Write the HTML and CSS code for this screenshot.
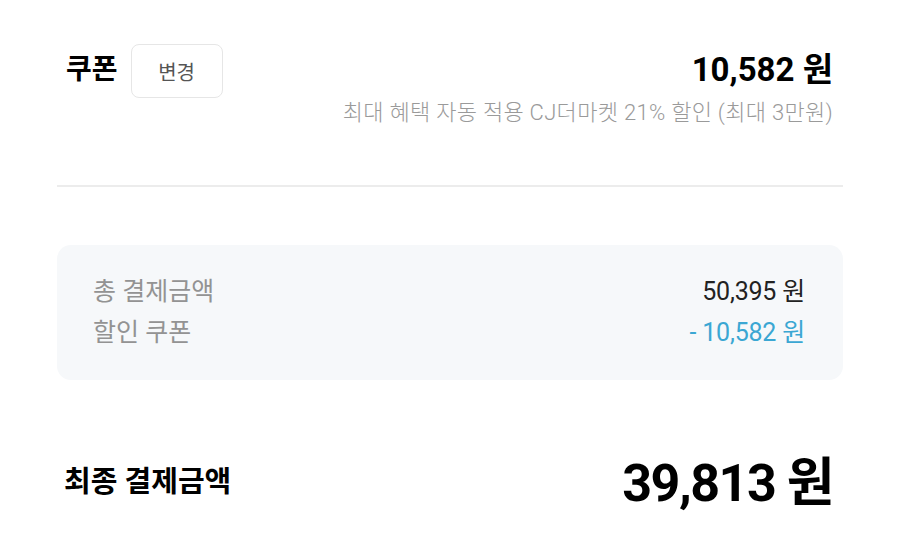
FILE: index.html
```html
<!DOCTYPE html>
<html lang="ko">
<head>
  <meta charset="UTF-8">
  <meta name="viewport" content="width=device-width, initial-scale=1.0">
  <title>결제금액</title>
  <link rel="stylesheet" href="styles.css">
</head>
<body>
  <div class="page">
    <!-- Coupon -->
    <div class="coupon">
      <div class="coupon-row">
        <div class="coupon-left">
          <span class="coupon-title">쿠폰</span>
          <button class="change-btn">변경</button>
        </div>
        <div class="coupon-amount">10,582 원</div>
      </div>
      <p class="coupon-note">최대 혜택 자동 적용 CJ더마켓 21% 할인 (최대 3만원)</p>
    </div>

    <hr class="divider">

    <!-- Summary box -->
    <div class="summary">
      <div class="summary-row">
        <span class="label">총 결제금액</span>
        <span class="value">50,395 원</span>
      </div>
      <div class="summary-row">
        <span class="label">할인 쿠폰</span>
        <span class="value discount">- 10,582 원</span>
      </div>
    </div>

    <!-- Final -->
    <div class="final">
      <span class="final-label">최종 결제금액</span>
      <span class="final-amount">39,813 원</span>
    </div>
  </div>
</body>
</html>
```

FILE: styles.css
```css
body {
  margin: 0;
  padding: 0;
  background-color: #fff;
  font-family: Roboto, "Noto Sans CJK KR", sans-serif;
  color: #111;
}
.page {
  padding: 44px 57px 0 57px;
}
.coupon {
  padding: 0 10px 0 9px;
}
.coupon-row {
  display: flex;
  justify-content: space-between;
  align-items: center;
  height: 54px;
}
.coupon-left {
  display: flex;
  align-items: center;
  gap: 13px;
}
.coupon-title {
  font-size: 28px;
  font-weight: 700;
  color: #000;
  margin-bottom: 8px;
}
.change-btn {
  width: 92px;
  height: 54px;
  border: 1px solid #e6e6e6;
  border-radius: 8px;
  background: #fff;
  font-family: "Noto Sans CJK KR", sans-serif;
  font-size: 20px;
  color: #555;
  cursor: pointer;
}
.coupon-amount {
  font-size: 33px;
  font-weight: 700;
  color: #000;
  margin-bottom: 8px;
}
.coupon-note {
  margin: 0;
  text-align: right;
  font-size: 22px;
  font-weight: 300;
  color: #9a9a9a;
  line-height: 30px;
  letter-spacing: 0.3px;
}
.divider {
  border: none;
  border-top: 2px solid #ececec;
  margin: 57px 0 58px 0;
}
.summary {
  background-color: #f6f8fa;
  border-radius: 14px;
  padding: 23px 38px 30px 36px;
}
.summary-row {
  display: flex;
  justify-content: space-between;
  align-items: center;
  height: 41px;
  font-size: 25px;
}
.label {
  color: #939393;
}
.value {
  color: #222;
  letter-spacing: -0.2px;
}
.discount {
  color: #3ba7d3;
}
.final {
  display: flex;
  justify-content: space-between;
  align-items: center;
  padding: 61px 10px 0 7px;
}
.final-label {
  font-size: 29px;
  font-weight: 700;
  color: #000;
}
.final-amount {
  font-size: 52px;
  font-weight: 700;
  color: #000;
  letter-spacing: -1.5px;
}
```
